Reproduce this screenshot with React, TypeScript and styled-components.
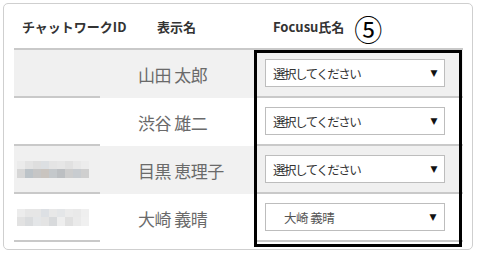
import React from "react";
import styled, { createGlobalStyle } from "styled-components";

const Global = createGlobalStyle`
  html, body { margin: 0; padding: 0; background: #fff; }
  body { font-family: "Noto Sans CJK JP", "Noto Sans", sans-serif; }
`;

const Card = styled.div`
  margin: 3px 0 0 3px;
  width: 470px;
  height: 247px;
  box-sizing: border-box;
  border: 1px solid #cfcfcf;
  border-radius: 5px;
  overflow: hidden;
  background: #fff;
  padding: 0 9px 0 10px;
`;

const Table = styled.div`
  position: relative;
  display: flex;
  flex-direction: column;
`;

const HeaderRow = styled.div`
  display: grid;
  grid-template-columns: 135px 116px 1fr;
  height: 44px;
  align-items: center;
  border-bottom: 2px solid #c9c9c9;
`;

const HeaderCell = styled.div`
  padding-left: 8px;
  font-size: 13px;
  font-weight: 700;
  color: #333;
  display: flex;
  align-items: center;
  white-space: nowrap;
`;

const CircledNumber = styled.span`
  font-size: 28px;
  line-height: 1;
  font-weight: 400;
  color: #000;
  margin-left: 10px;
  margin-top: 5px;
  font-family: "Noto Sans CJK JP", sans-serif;
`;

const Row = styled.div<{ $shaded: boolean }>`
  display: grid;
  grid-template-columns: 86px 155px 1fr;
  height: 48px;
  background: ${(p) => (p.$shaded ? "#f0f0f0" : "#fff")};
`;

const IdCell = styled.div`
  border-bottom: 2px solid #c9c9c9;
  display: flex;
  align-items: center;
  padding-left: 3px;
`;

const NameCell = styled.div<{ $shaded: boolean }>`
  background: ${(p) => (p.$shaded ? "#f1f1f1" : "#fff")};
  display: flex;
  align-items: center;
  padding-left: 38px;
  font-size: 17px;
  color: #6a6a6a;
  letter-spacing: -0.5px;
`;

const SelectCell = styled.div`
  border-bottom: 2px solid #c9c9c9;
  display: flex;
  align-items: center;
  padding-left: 10px;
`;

const SelectBox = styled.div<{ $filled: boolean }>`
  width: 180px;
  height: 28px;
  box-sizing: border-box;
  border: 1px solid #bdbdbd;
  background: #fff;
  display: flex;
  align-items: center;
  justify-content: space-between;
  padding: 0 8px 0 ${(p) => (p.$filled ? "18px" : "7px")};
  font-size: 12.5px;
  color: ${(p) => (p.$filled ? "#555" : "#333")};
  letter-spacing: ${(p) => (p.$filled ? "-0.5px" : "-1.5px")};
`;

const Arrow = styled.span`
  font-size: 9px;
  color: #111;
  font-family: "DejaVu Sans", sans-serif;
`;

const Mosaic = styled.div`
  display: grid;
  grid-template-columns: repeat(9, 8px);
  grid-template-rows: 8px 9px;
  margin-top: 1px;
`;

const Tile = styled.div<{ $c: string }>`
  background: ${(p) => p.$c};
`;

const Annotation = styled.div`
  position: absolute;
  left: 240px;
  top: 46px;
  width: 208px;
  height: 197px;
  box-sizing: border-box;
  border: 3px solid #000;
  pointer-events: none;
`;

const mosaics: Record<number, string[]> = {
  2: [
    "#ebebeb", "#e3e3e3", "#dedede", "#dcdfe2", "#e4e4e4", "#e6e6e6", "#e1e1e1", "#e8e8e8", "#ececec",
    "#d6d6d6", "#bcc3c8", "#c6c6c6", "#c9c4bf", "#c4c8cb", "#bcbfc2", "#cdcdcd", "#c8ccd0", "#cfcfcf",
  ],
  3: [
    "#ececec", "#e6e6e6", "#e6e6e6", "#dde0e4", "#e8e8e8", "#e4e6e8", "#ebebeb", "#e9e9e9", "#efefef",
    "#e2e2e2", "#dadcde", "#e4e6e8", "#e4e4e4", "#d8dadc", "#eeeeee", "#e0e0e0", "#eaeaea", "#f0f0f0",
  ],
};

const rows = [
  { name: "山田 太郎", value: "" },
  { name: "渋谷 雄二", value: "" },
  { name: "目黒 恵理子", value: "" },
  { name: "大崎 義晴", value: "大崎 義晴" },
];

export default function App() {
  return (
    <>
      <Global />
      <Card>
        <Table>
          <HeaderRow>
            <HeaderCell>チャットワークID</HeaderCell>
            <HeaderCell>表示名</HeaderCell>
            <HeaderCell>
              Focusu氏名<CircledNumber>⑤</CircledNumber>
            </HeaderCell>
          </HeaderRow>
          {rows.map((r, i) => {
            const shaded = i % 2 === 0;
            return (
              <Row key={i} $shaded={shaded}>
                <IdCell>
                  {mosaics[i] && (
                    <Mosaic>
                      {mosaics[i].map((c, j) => (
                        <Tile key={j} $c={c} />
                      ))}
                    </Mosaic>
                  )}
                </IdCell>
                <NameCell $shaded={shaded}>{r.name}</NameCell>
                <SelectCell>
                  <SelectBox $filled={!!r.value}>
                    <span>{r.value || "選択してください"}</span>
                    <Arrow>▼</Arrow>
                  </SelectBox>
                </SelectCell>
              </Row>
            );
          })}
          <Annotation />
        </Table>
      </Card>
    </>
  );
}
